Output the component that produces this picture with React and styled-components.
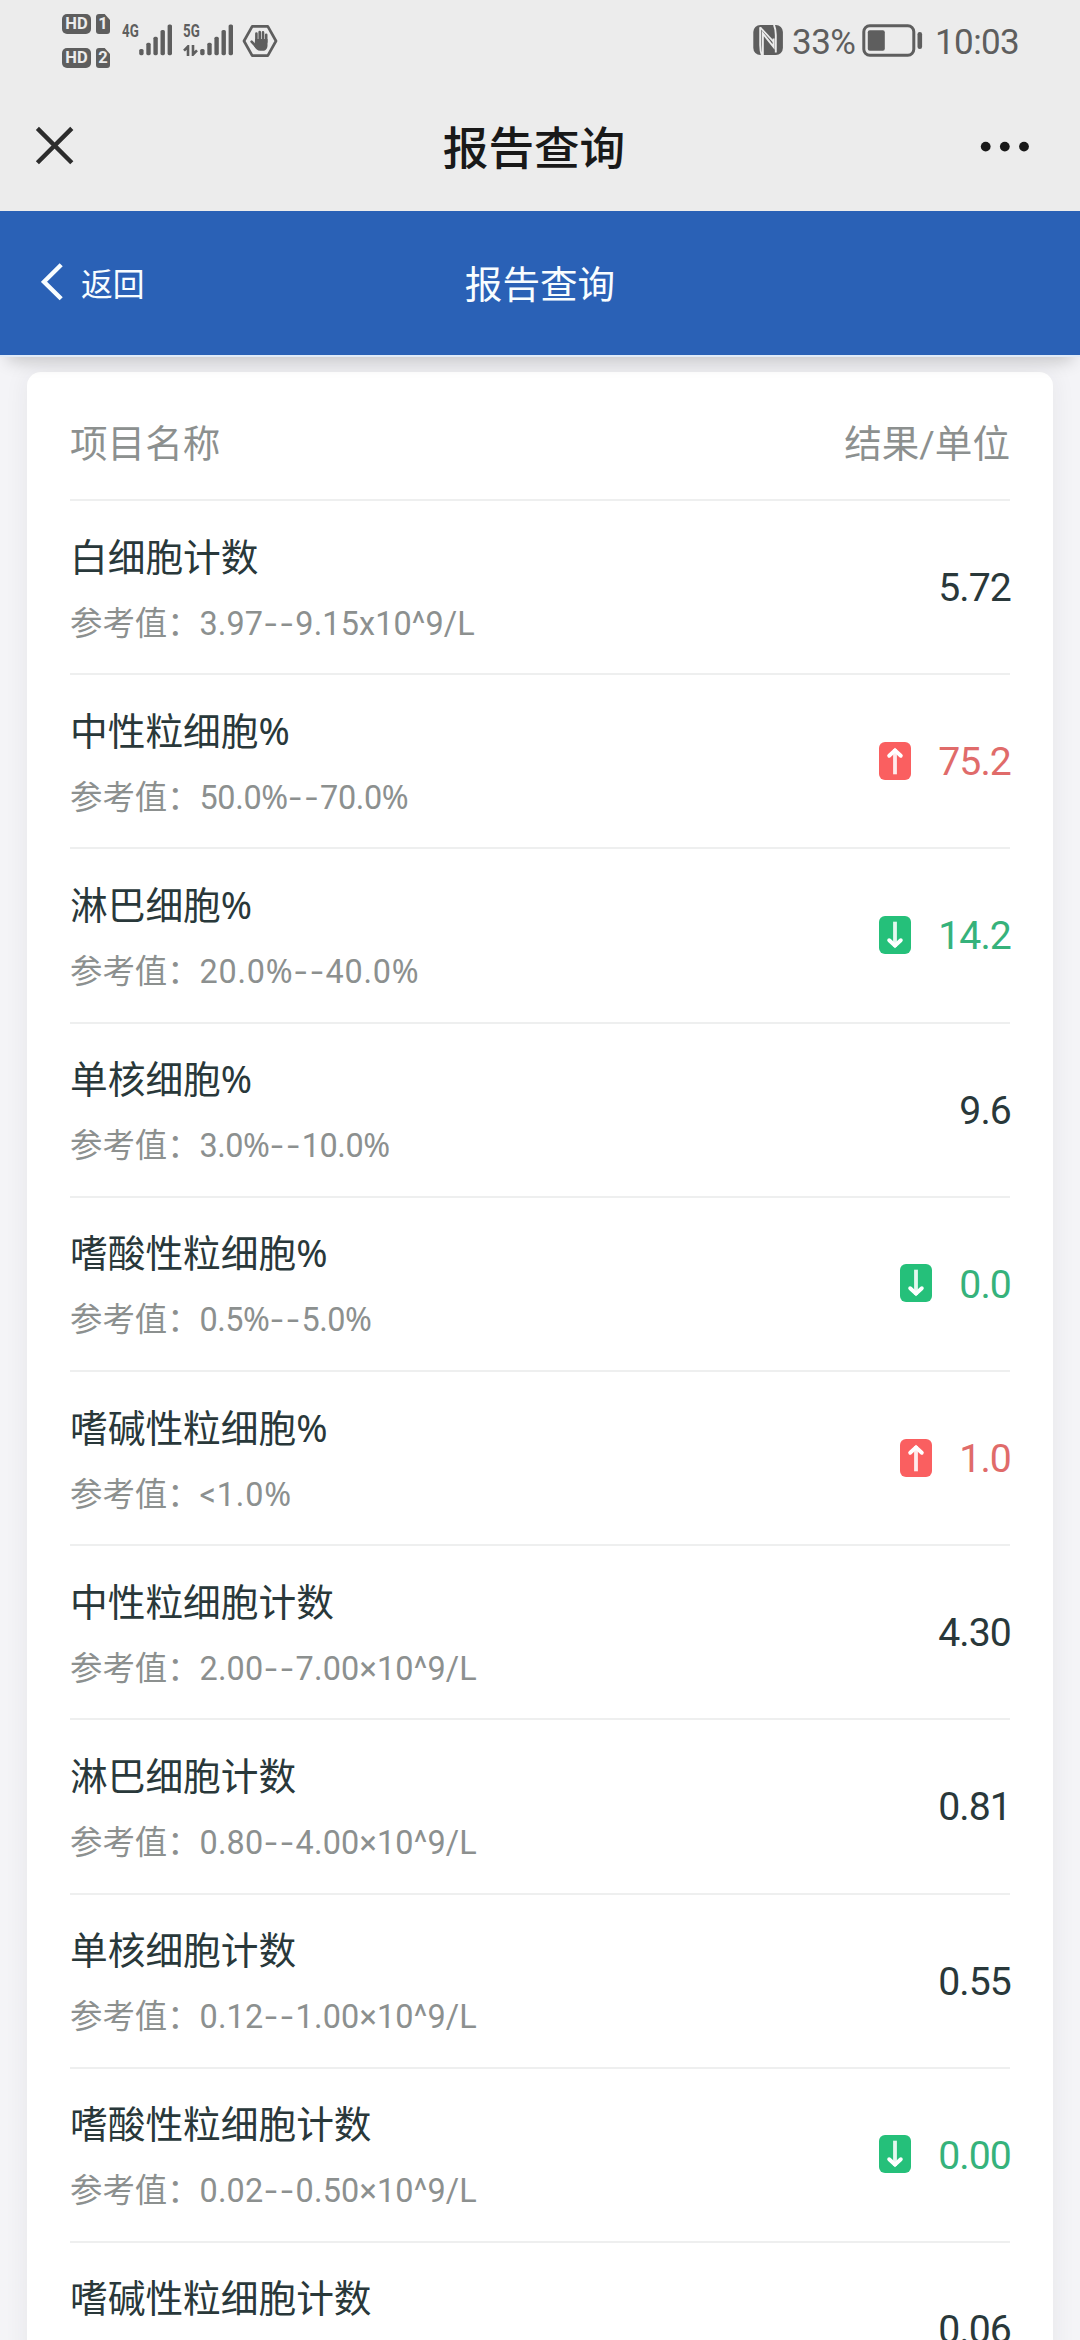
import React from "react";
import styled, { createGlobalStyle, css } from "styled-components";

const GlobalStyle = createGlobalStyle`
  * { box-sizing: border-box; }
  html, body { margin: 0; padding: 0; }
  body {
    background: #f4f4f7;
    font-family: Roboto, "Noto Sans CJK SC", sans-serif;
    -webkit-font-smoothing: antialiased;
  }
`;

const Screen = styled.div`
  display: flex;
  flex-direction: column;
  width: 1080px;
  height: 2340px;
  overflow: hidden;
  background: #f4f4f7;
`;

const StatusBar = styled.div`
  flex: none;
  display: flex;
  justify-content: space-between;
  height: 80px;
  padding: 0 61px 0 62px;
  background: #ececec;
  color: #5e5e5e;
`;

const StatusGroup = styled.div`
  display: flex;
  align-items: flex-start;
`;

const SimStack = styled.div`
  display: grid;
  grid-template-columns: 29px 14px;
  grid-auto-rows: 20px;
  gap: 14px 5px;
  padding-top: 14px;
`;

const Badge = styled.span`
  display: flex;
  align-items: center;
  justify-content: center;
  border-radius: 5px;
  background: #5e5e5e;
  color: #ececec;
  font: 700 16.5px/20px Roboto, sans-serif;
  ${(p) =>
    p.$sim &&
    css`
      border-radius: 3px;
      clip-path: polygon(0 0, 62% 0, 100% 30%, 100% 100%, 0 100%);
    `}
`;

const Signal = styled.div`
  display: grid;
  grid-template-columns: 17px 34px;
  grid-template-rows: 16px 18px;
  margin: 23px 0 0 ${(p) => p.$gap}px;
  svg { display: block; }
`;

const NetLabel = styled.span`
  font: 700 18.5px/17px Roboto, sans-serif;
  transform: scaleX(0.72);
  transform-origin: 0 50%;
  white-space: nowrap;
`;

const BarsCell = styled.div`
  grid-column: 2;
  grid-row: 1 / 3;
`;

const ArrowsCell = styled.div`
  grid-column: 1;
  grid-row: 2;
  padding-top: 6px;
`;

const HexCell = styled.div`
  margin: 24px 0 0 8px;
  svg { display: block; }
`;

const StatusIcon = styled.div`
  margin: 24px ${(p) => p.$right}px 0 0;
  svg { display: block; }
`;

const StatusText = styled.span`
  width: ${(p) => p.$width}px;
  margin-right: ${(p) => p.$right || 0}px;
  padding-top: 22px;
  font: 400 35px/41px Roboto, sans-serif;
  letter-spacing: ${(p) => p.$track}px;
  white-space: nowrap;
`;

const TitleBar = styled.div`
  flex: none;
  display: grid;
  grid-template-columns: 194px 1fr 206px;
  align-items: center;
  height: 131px;
  background: #ececec;
  svg { display: block; }
`;

const CloseSlot = styled.div`
  padding: 1px 0 0 35px;
`;

const MoreSlot = styled.div`
  display: flex;
  justify-content: flex-end;
  padding-right: 50px;
`;

const PageTitle = styled.h1`
  margin: 0;
  padding-top: 8px;
  text-align: center;
  color: #191919;
  font-size: 45.6px;
  font-weight: 500;
  line-height: 60px;
`;

const NavBar = styled.nav`
  flex: none;
  position: relative;
  display: grid;
  grid-template-columns: 240px 1fr 240px;
  align-items: center;
  height: 146px;
  border-bottom: 2px solid #e0ebf8;
  background: #2a61b6;
  color: #f8fdff;
  box-shadow: 0 12px 16px -8px rgba(0, 0, 0, 0.2);
`;

const Back = styled.div`
  display: flex;
  align-items: center;
  gap: 17px;
  padding-left: 41px;
  font-size: 31.8px;
  line-height: 44px;
  svg { display: block; }
`;

const BackLabel = styled.span`
  padding-top: 4px;
`;

const NavTitle = styled.h2`
  margin: 0;
  padding-top: 3px;
  text-align: center;
  font-size: 37.6px;
  font-weight: 400;
  line-height: 54px;
`;

const Card = styled.main`
  flex: 1 0 auto;
  margin: 15px 27px 0;
  padding: 0 43px;
  border-radius: 14px 14px 0 0;
  background: #fff;
  box-shadow: 0 0 24px rgba(40, 40, 60, 0.07);
`;

const HeadRow = styled.div`
  display: flex;
  align-items: center;
  justify-content: space-between;
  height: 129px;
  padding-top: 17px;
  border-bottom: 2px solid #eeefef;
  color: #8c908f;
  font-size: 37.6px;
  line-height: 54px;
`;

const Row = styled.div`
  display: flex;
  align-items: center;
  justify-content: space-between;
  height: 174.2px;
  border-bottom: 2px solid #eeefef;
`;

const Item = styled.div`
  display: flex;
  flex-direction: column;
  gap: 17px;
  padding-top: 2px;
`;

const ItemName = styled.div`
  height: 54px;
  color: #29383a;
  font-size: 37.7px;
  line-height: 54px;
  white-space: nowrap;
`;

const Reference = styled.div`
  display: flex;
  height: 44px;
  color: #8c908f;
  font-size: 32.4px;
  line-height: 44px;
  white-space: nowrap;
`;

const RefLabel = styled.span`
  width: 129.5px;
`;

const RefValue = styled.span`
  letter-spacing: ${(p) => p.$track}px;
`;

const Dash = styled.span`
  font-family: Inter, sans-serif;
  letter-spacing: 1.2px;
  line-height: 0;
`;

const Percent = styled.span`
  font-family: "Noto Sans", sans-serif;
  line-height: 0;
`;

const Result = styled.div`
  display: flex;
  align-items: center;
  gap: 27px;
  padding-top: 2px;
  color: ${(p) => p.$color};
  font-size: 39.2px;
  line-height: 54px;
`;

const ResultValue = styled.span`
  margin-right: -1px;
  letter-spacing: -0.9px;
`;

const Flag = styled.span`
  display: flex;
  align-items: center;
  justify-content: center;
  width: 32px;
  height: 38px;
  margin-top: -3px;
  border-radius: 6px;
  background: ${(p) => p.$color};
  svg { display: block; }
`;

const levels = {
  normal: { text: "#29383a" },
  high: { text: "#e06b6a", badge: "#fa5f60" },
  low: { text: "#36b27b", badge: "#25c07a" },
};

const rows = [
  { name: "白细胞计数", range: "3.97--9.15x10^9/L", track: 0.12, value: "5.72", level: "normal" },
  { name: "中性粒细胞%", range: "50.0%--70.0%", track: -0.35, value: "75.2", level: "high" },
  { name: "淋巴细胞%", range: "20.0%--40.0%", track: 0.75, value: "14.2", level: "low" },
  { name: "单核细胞%", range: "3.0%--10.0%", track: -0.45, value: "9.6", level: "normal" },
  { name: "嗜酸性粒细胞%", range: "0.5%--5.0%", track: -0.5, value: "0.0", level: "low" },
  { name: "嗜碱性粒细胞%", range: "<1.0%", track: 0.85, value: "1.0", level: "high" },
  { name: "中性粒细胞计数", range: "2.00--7.00×10^9/L", track: 0.18, value: "4.30", level: "normal" },
  { name: "淋巴细胞计数", range: "0.80--4.00×10^9/L", track: 0.18, value: "0.81", level: "normal" },
  { name: "单核细胞计数", range: "0.12--1.00×10^9/L", track: 0.18, value: "0.55", level: "normal" },
  { name: "嗜酸性粒细胞计数", range: "0.02--0.50×10^9/L", track: 0.18, value: "0.00", level: "low" },
  { name: "嗜碱性粒细胞计数", value: "0.06", level: "normal" },
];

function Runs({ text }) {
  return text.split(/(--|%)/).map((part, i) => {
    if (part === "--") return <Dash key={i}>{part}</Dash>;
    if (part === "%") return <Percent key={i}>{part}</Percent>;
    return part;
  });
}

function SignalBars() {
  const tops = [26, 19.7, 13.7, 7, 1.4];
  return (
    <svg width="34" height="34" viewBox="0 0 34 34" fill="#5e5e5e">
      {tops.map((top, i) => (
        <rect key={top} x={0.2 + i * 7.1} y={top} width="4.4" height={32.2 - top} rx="1.6" />
      ))}
    </svg>
  );
}

function DataArrows() {
  return (
    <svg width="16" height="11" viewBox="0 0 16 11" fill="none" stroke="#5e5e5e" strokeWidth="2.6">
      <path d="M5 11V1.5L1 5.6M10 0v9.5l4-4.1" />
    </svg>
  );
}

function HandHex() {
  return (
    <svg width="36" height="34" viewBox="0 0 36 34">
      <path
        d="M10.2 2.4h15.6L34 17l-8.2 14.6H10.2L2 17z"
        fill="none"
        stroke="#5e5e5e"
        strokeWidth="2.7"
        strokeLinejoin="round"
      />
      <g stroke="#5e5e5e" strokeWidth="2.6" strokeLinecap="round" fill="none">
        <path d="M14.4 18V9.6M17.7 17V8M21 17V8.4M24.2 18v-7.2M9.6 17.6l4.6 5" />
      </g>
      <path d="M13.1 15h12.4v6.2c0 3.3-1.8 5.6-4.6 5.6h-2.6c-3 0-4.4-2-5.9-4.4z" fill="#5e5e5e" />
    </svg>
  );
}

function NfcIcon() {
  return (
    <svg width="30" height="32" viewBox="0 0 30 32">
      <rect x="0.3" y="1" width="29.6" height="30" rx="7" fill="#5e5e5e" />
      <path d="M9.8 31V9.4L20.6 23V14.6" fill="none" stroke="#ececec" strokeWidth="2" />
      <path
        d="M7.2 3.2V21c0 4.4.6 7.6 1.8 10.6M22.8 28.6V11c0-4.4-.6-7.2-1.8-10.2"
        fill="none"
        stroke="#ececec"
        strokeWidth="1.9"
      />
      <path d="M7.2 3.4L20.4 17.6" fill="none" stroke="#ececec" strokeWidth="1.7" />
    </svg>
  );
}

function BatteryIcon() {
  return (
    <svg width="61" height="33" viewBox="0 0 61 33">
      <rect x="1.8" y="1.8" width="50" height="29.4" rx="6" fill="none" stroke="#5e5e5e" strokeWidth="3" />
      <rect x="5.8" y="6.2" width="17" height="20.6" rx="2" fill="#5e5e5e" />
      <rect x="55.5" y="8" width="4.6" height="17" rx="2.2" fill="#5e5e5e" />
    </svg>
  );
}

function CloseIcon() {
  return (
    <svg width="40" height="40" viewBox="0 0 40 40" stroke="#2c2c2c" strokeWidth="4.4">
      <path d="M2.4 2.4l34.4 34.4M36.8 2.4L2.4 36.8" />
    </svg>
  );
}

function MoreIcon() {
  return (
    <svg width="50" height="12" viewBox="0 0 50 12" fill="#191919">
      <circle cx="5.7" cy="6.6" r="4.9" />
      <circle cx="24.8" cy="6.6" r="4.9" />
      <circle cx="44" cy="6.6" r="4.9" />
    </svg>
  );
}

function BackIcon() {
  return (
    <svg width="23" height="40" viewBox="0 0 23 40" fill="none" stroke="#f8fdff" strokeWidth="4.4">
      <path d="M20.2 1.8L3 18.8l17.2 17" />
    </svg>
  );
}

function ArrowIcon({ up }) {
  return (
    <svg
      width="18"
      height="30"
      viewBox="0 0 18 30"
      fill="none"
      stroke="#fff"
      strokeLinecap="round"
    >
      <g transform={up ? undefined : "rotate(180 9 15)"}>
        <path d="M9 26.4V5" strokeWidth="3.8" strokeLinecap="square" strokeOpacity="0.88" />
        <path d="M3.2 9.8L9 4.4l5.8 5.4" strokeWidth="3.9" />
      </g>
    </svg>
  );
}

export default function App() {
  return (
    <Screen>
      <GlobalStyle />
      <StatusBar>
        <StatusGroup>
          <SimStack>
            <Badge>HD</Badge>
            <Badge $sim>1</Badge>
            <Badge>HD</Badge>
            <Badge $sim>2</Badge>
          </SimStack>
          <Signal $gap={12}>
            <NetLabel>4G</NetLabel>
            <BarsCell><SignalBars /></BarsCell>
          </Signal>
          <Signal $gap={10}>
            <NetLabel>5G</NetLabel>
            <BarsCell><SignalBars /></BarsCell>
            <ArrowsCell><DataArrows /></ArrowsCell>
          </Signal>
          <HexCell><HandHex /></HexCell>
        </StatusGroup>
        <StatusGroup>
          <StatusIcon $right={9}><NfcIcon /></StatusIcon>
          <StatusText $width={65} $right={5} $track={-0.5}>33%</StatusText>
          <StatusIcon $right={12}><BatteryIcon /></StatusIcon>
          <StatusText $width={84} $track={-0.6}>10:03</StatusText>
        </StatusGroup>
      </StatusBar>
      <TitleBar>
        <CloseSlot><CloseIcon /></CloseSlot>
        <PageTitle>报告查询</PageTitle>
        <MoreSlot><MoreIcon /></MoreSlot>
      </TitleBar>
      <NavBar>
        <Back>
          <BackIcon />
          <BackLabel>返回</BackLabel>
        </Back>
        <NavTitle>报告查询</NavTitle>
      </NavBar>
      <Card>
        <HeadRow>
          <span>项目名称</span>
          <span>结果/单位</span>
        </HeadRow>
        {rows.map((row) => {
          const level = levels[row.level];
          return (
            <Row key={row.name}>
              <Item>
                <ItemName><Runs text={row.name} /></ItemName>
                <Reference>
                  {row.range && (
                    <>
                      <RefLabel>参考值：</RefLabel>
                      <RefValue $track={row.track}><Runs text={row.range} /></RefValue>
                    </>
                  )}
                </Reference>
              </Item>
              <Result $color={level.text}>
                {level.badge && (
                  <Flag $color={level.badge}><ArrowIcon up={row.level === "high"} /></Flag>
                )}
                <ResultValue>{row.value}</ResultValue>
              </Result>
            </Row>
          );
        })}
      </Card>
    </Screen>
  );
}
